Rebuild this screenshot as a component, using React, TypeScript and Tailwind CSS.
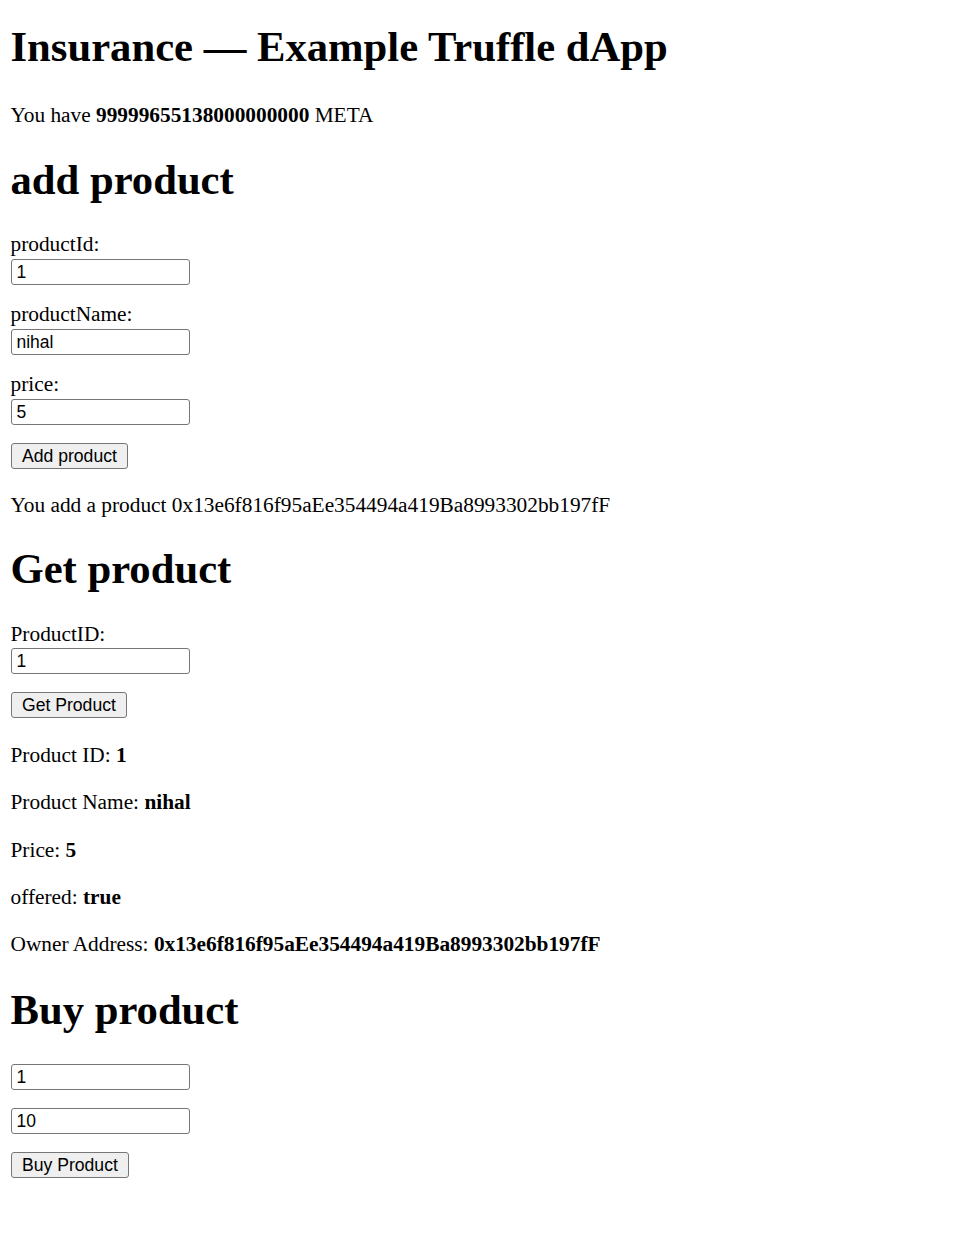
import React from "react";

const inputCls =
  "block w-[179px] h-[26px] border border-[#767676] rounded-[3px] bg-white px-[5px] pt-[1px] text-[17.5px] leading-[23px] text-black font-['Liberation_Sans',Arial,sans-serif] outline-none";
const btnCls =
  "block h-[26px] border border-[#767676] rounded-[3px] bg-[#efefef] px-[10.5px] text-[17.6px] leading-[24px] text-black font-['Liberation_Sans',Arial,sans-serif]";
const h1Cls = "text-[42.67px] leading-[49px] font-bold";
const pCls = "text-[21.33px] leading-[24px]";

export default function App() {
  return (
    <div className="min-h-[1254px] bg-white text-black font-['Liberation_Serif','Times_New_Roman',serif] pl-[10.5px] pt-[21.5px] flex flex-col items-start">
      <h1 className={h1Cls}>Insurance — Example Truffle dApp</h1>
      <p className={`${pCls} mt-[32.8px]`}>
        You have <strong className="font-bold">99999655138000000000</strong> META
      </p>

      <h1 className={`${h1Cls} mt-[27.8px]`}>add product</h1>
      <label className={`${pCls} mt-[28.4px]`}>productId:</label>
      <input className={`${inputCls} mt-[2.5px]`} defaultValue="1" />
      <label className={`${pCls} mt-[17.5px]`}>productName:</label>
      <input className={`${inputCls} mt-[2.5px]`} defaultValue="nihal" />
      <label className={`${pCls} mt-[17.5px]`}>price:</label>
      <input className={`${inputCls} mt-[2.5px]`} defaultValue="5" />
      <button className={`${btnCls} mt-[18.3px]`}>Add product</button>
      <p className={`${pCls} mt-[23.8px]`}>
        You add a product 0x13e6f816f95aEe354494a419Ba8993302bb197fF
      </p>

      <h1 className={`${h1Cls} mt-[26.7px]`}>Get product</h1>
      <label className={`${pCls} mt-[29.7px]`}>ProductID:</label>
      <input className={`${inputCls} mt-[2px]`} defaultValue="1" />
      <button className={`${btnCls} mt-[18px]`}>Get Product</button>
      <p className={`${pCls} mt-[24.6px]`}>
        Product ID: <strong className="font-bold">1</strong>
      </p>
      <p className={`${pCls} mt-[23.3px]`}>
        Product Name: <strong className="font-bold">nihal</strong>
      </p>
      <p className={`${pCls} mt-[23.3px]`}>
        Price: <strong className="font-bold">5</strong>
      </p>
      <p className={`${pCls} mt-[23.3px]`}>
        offered: <strong className="font-bold">true</strong>
      </p>
      <p className={`${pCls} mt-[23.3px]`}>
        Owner Address:{" "}
        <strong className="font-bold">0x13e6f816f95aEe354494a419Ba8993302bb197fF</strong>
      </p>

      <h1 className={`${h1Cls} mt-[29.2px]`}>Buy product</h1>
      <input className={`${inputCls} mt-[29.3px]`} defaultValue="1" />
      <input className={`${inputCls} mt-[18px]`} defaultValue="10" />
      <button className={`${btnCls} mt-[18px]`}>Buy Product</button>
    </div>
  );
}
